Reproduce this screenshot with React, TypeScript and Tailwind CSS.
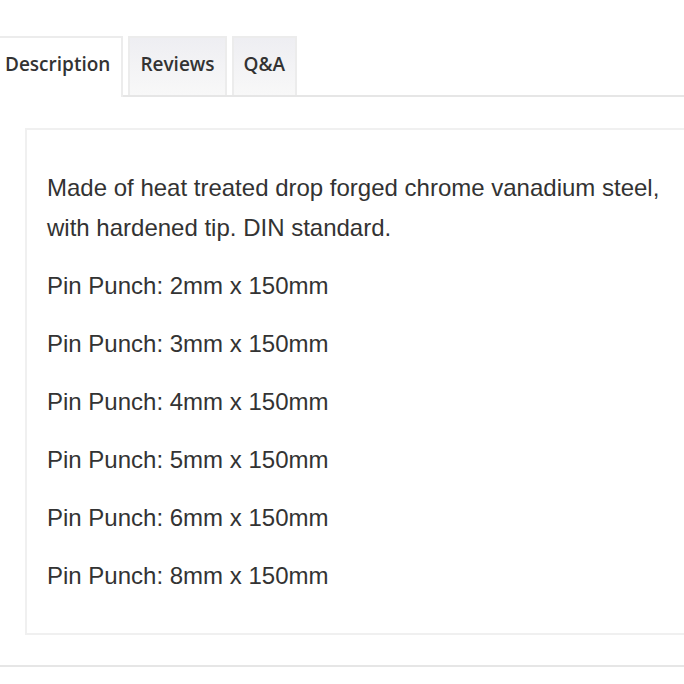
import React from 'react';

const SIZES = ['2mm', '3mm', '4mm', '5mm', '6mm', '8mm'];

export default function App() {
  return (
    <div className="w-[684px] h-[684px] bg-white overflow-hidden">
      {/* Tabs */}
      <div className="pt-[36px] border-b-2 border-[#e6e6e6] flex gap-[5px] -ml-[2px] font-['Open_Sans',sans-serif] font-semibold text-[19px] text-[#333]">
        <div className="h-[61px] -mb-[2px] pl-[7px] pr-[11px] pt-[12px] bg-white border-t-2 border-r-2 border-[#ececec]">
          Description
        </div>
        <div className="h-[59px] px-[10px] pt-[12px] bg-gradient-to-b from-[#eeeef2] to-[#f8f8f8] border-t-2 border-x-2 border-[#ececec]">
          Reviews
        </div>
        <div className="h-[59px] px-[10px] pt-[12px] bg-gradient-to-b from-[#eeeef2] to-[#f8f8f8] border-t-2 border-x-2 border-[#ececec]">
          Q&amp;A
        </div>
      </div>

      {/* Description panel */}
      <div className="pt-[31px] pl-[25px]">
        <div className="w-[700px] h-[507px] border-2 border-[#f0f0f0] pt-[38px] pl-[20px] font-['Liberation_Sans',Arial,sans-serif] text-[24px] text-[#333]">
          <p className="leading-[40px]">
            Made of heat treated drop forged chrome vanadium steel,
            <br />
            with hardened tip. DIN standard.
          </p>
          {SIZES.map((s) => (
            <p key={s} className="leading-[40px] mt-[18px]">
              Pin Punch: {s} x 150mm
            </p>
          ))}
        </div>
      </div>

      <div className="mt-[30px] border-t-2 border-[#e6e6e6]" />
    </div>
  );
}
